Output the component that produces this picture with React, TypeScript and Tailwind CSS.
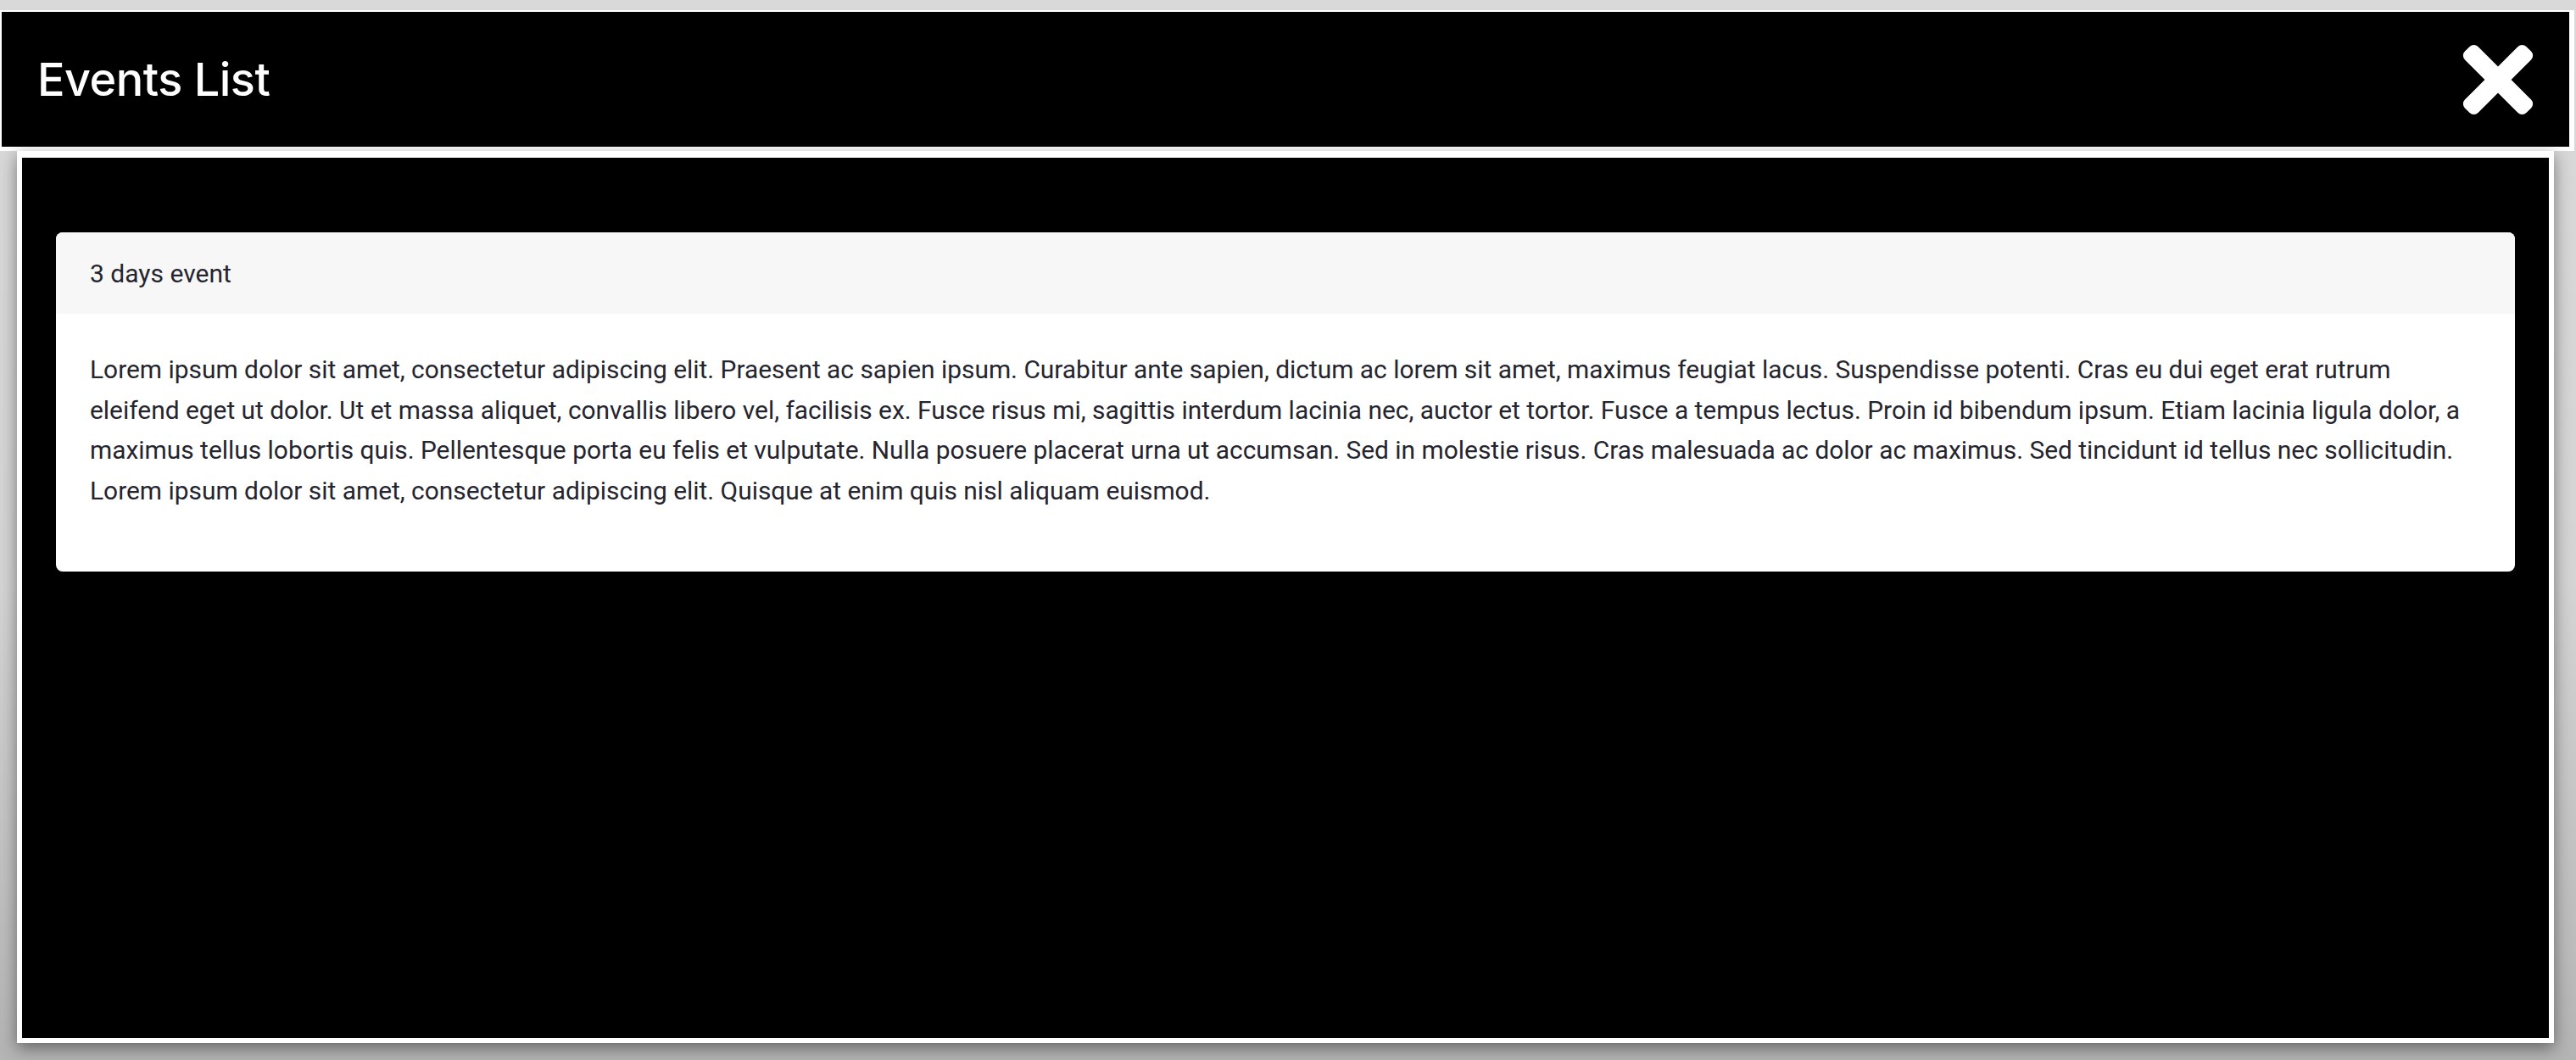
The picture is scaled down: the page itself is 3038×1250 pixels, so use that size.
import React from 'react';

const loremText =
  'Lorem ipsum dolor sit amet, consectetur adipiscing elit. Praesent ac sapien ipsum. Curabitur ante sapien, dictum ac lorem sit amet, maximus feugiat lacus. Suspendisse potenti. Cras eu dui eget erat rutrum eleifend eget ut dolor. Ut et massa aliquet, convallis libero vel, facilisis ex. Fusce risus mi, sagittis interdum lacinia nec, auctor et tortor. Fusce a tempus lectus. Proin id bibendum ipsum. Etiam lacinia ligula dolor, a maximus tellus lobortis quis. Pellentesque porta eu felis et vulputate. Nulla posuere placerat urna ut accumsan. Sed in molestie risus. Cras malesuada ac dolor ac maximus. Sed tincidunt id tellus nec sollicitudin. Lorem ipsum dolor sit amet, consectetur adipiscing elit. Quisque at enim quis nisl aliquam euismod.';

function CloseIcon() {
  return (
    <svg width="88" height="88" viewBox="0 0 88 88" fill="#fff">
      <rect x="-7.25" y="33" width="102.5" height="22" rx="7" transform="rotate(45 44 44)" />
      <rect x="-7.25" y="33" width="102.5" height="22" rx="7" transform="rotate(-45 44 44)" />
    </svg>
  );
}

export default function App() {
  return (
    <div className="relative h-[1250px] w-full overflow-hidden bg-[linear-gradient(180deg,#d9d9d9_0%,#d4d4d4_55%,#b4b4b4_100%)]">
      {/* Header bar */}
      <header className="mt-[12px] flex h-[166px] w-[3036px] items-center justify-between border-t-2 border-l-2 border-r-[6px] border-b-[5px] border-white bg-black pl-[42px] pr-[40px]">
        <h1 className="text-[54px] font-medium leading-none tracking-[-0.5px] text-white [font-family:Inter,'Open_Sans',sans-serif]">
          Events List
        </h1>
        <button className="flex h-[88px] w-[88px] items-center justify-center">
          <CloseIcon />
        </button>
      </header>

      {/* Modal body */}
      <main className="ml-[20px] h-[1052px] w-[2992px] border-[6px] border-t-8 border-white bg-black pt-[88px] shadow-[0_6px_18px_rgba(0,0,0,0.45)]">
        <section className="mx-[40px] overflow-hidden rounded-[8px] bg-white text-[#25252f] [font-family:Roboto,'Liberation_Sans',sans-serif]">
          <div className="flex h-[96px] items-center bg-[#f7f7f7] px-[40px] text-[30px]">3 days event</div>
          <div className="pt-[42px] pb-[72px] pl-[40px] pr-[50px]">
            <p className="text-[29.9px] leading-[47.6px]">{loremText}</p>
          </div>
        </section>
      </main>
    </div>
  );
}
